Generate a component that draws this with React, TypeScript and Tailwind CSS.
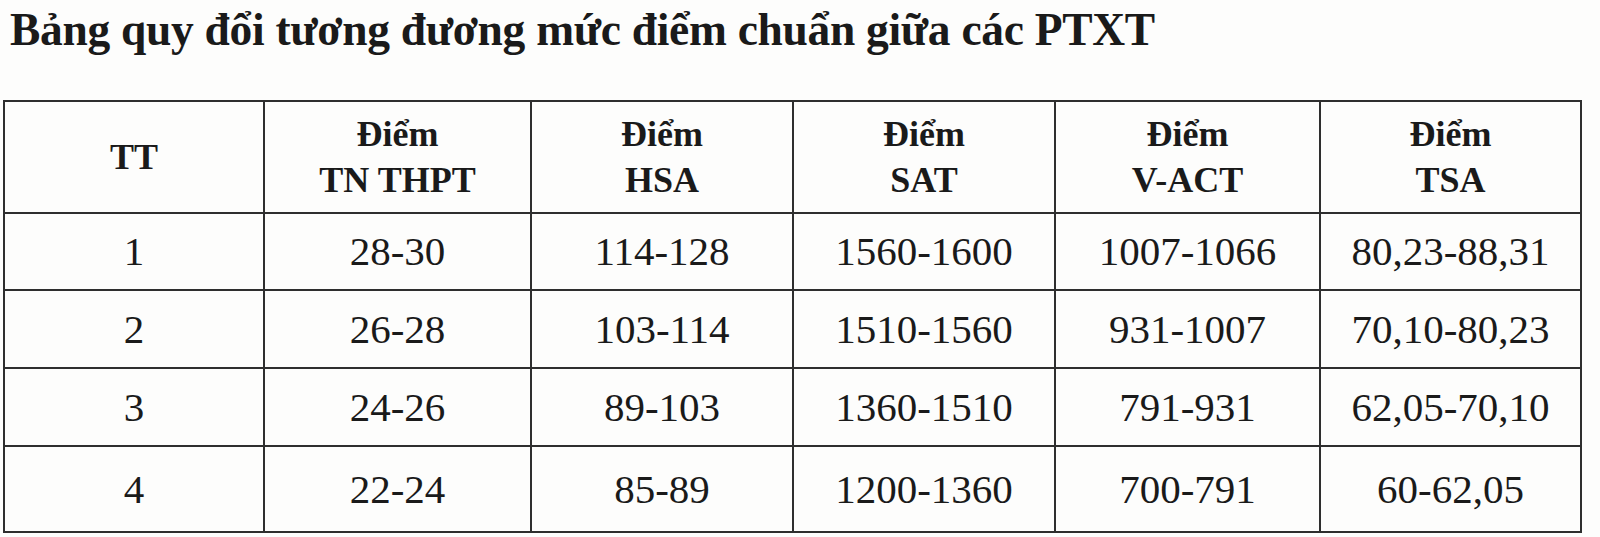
import React from "react";

const headers: { top?: string; bottom: string }[] = [
  { bottom: "TT" },
  { top: "Điểm", bottom: "TN THPT" },
  { top: "Điểm", bottom: "HSA" },
  { top: "Điểm", bottom: "SAT" },
  { top: "Điểm", bottom: "V-ACT" },
  { top: "Điểm", bottom: "TSA" },
];

const rows: string[][] = [
  ["1", "28-30", "114-128", "1560-1600", "1007-1066", "80,23-88,31"],
  ["2", "26-28", "103-114", "1510-1560", "931-1007", "70,10-80,23"],
  ["3", "24-26", "89-103", "1360-1510", "791-931", "62,05-70,10"],
  ["4", "22-24", "85-89", "1200-1360", "700-791", "60-62,05"],
];

export default function App() {
  return (
    <div
      className="w-[1600px] h-[537px] bg-[#fdfdfc] overflow-hidden text-[#1a1a1a]"
      style={{ fontFamily: '"Liberation Serif", "Times New Roman", serif' }}
    >
      <h1 className="pl-[10px] pt-[8px] text-[45.5px] leading-[44px] font-bold tracking-[-0.3px]">
        Bảng quy đổi tương đương mức điểm chuẩn giữa các PTXT
      </h1>
      <div className="ml-[3px] mt-[48px] w-[1579px] grid grid-cols-[258px_265px_260px_260px_263px_259px] grid-rows-[110px_75px_76px_76px_84px] gap-[2px] p-[2px] bg-[#2e2e2e]">
        {headers.map((h, i) => (
          <div
            key={"h" + i}
            className="bg-[#fdfdfc] flex flex-col items-center justify-center font-bold text-[36px] leading-[46px]"
          >
            {h.top && <span>{h.top}</span>}
            <span>{h.bottom}</span>
          </div>
        ))}
        {rows.map((r, ri) =>
          r.map((c, ci) => (
            <div
              key={ri + "-" + ci}
              className="bg-[#fdfdfc] flex items-center justify-center text-[41px] leading-none"
            >
              {c}
            </div>
          ))
        )}
      </div>
    </div>
  );
}
